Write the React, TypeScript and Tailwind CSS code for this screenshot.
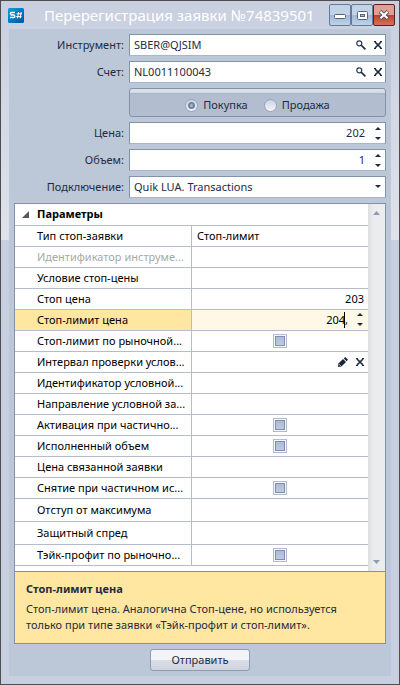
import type { ReactNode } from "react";

type RowKind = "text" | "number" | "spin" | "check" | "edit";
type Row = { name: string; kind: RowKind; value?: string; muted?: boolean; tall?: boolean };

const rows: Row[] = [
  { name: "Тип стоп-заявки", kind: "text", value: "Стоп-лимит" },
  { name: "Идентификатор инструме...", kind: "text", muted: true },
  { name: "Условие стоп-цены", kind: "text" },
  { name: "Стоп цена", kind: "number", value: "203" },
  { name: "Стоп-лимит цена", kind: "spin", value: "204," },
  { name: "Стоп-лимит по рыночной...", kind: "check" },
  { name: "Интервал проверки услов...", kind: "edit" },
  { name: "Идентификатор условной...", kind: "text" },
  { name: "Направление условной за...", kind: "text" },
  { name: "Активация при частично...", kind: "check" },
  { name: "Исполненный объем", kind: "check" },
  { name: "Цена связанной заявки", kind: "text" },
  { name: "Снятие при частичном ис...", kind: "check" },
  { name: "Отступ от максимума", kind: "text", tall: true },
  { name: "Защитный спред", kind: "text", tall: true },
  { name: "Тэйк-профит по рыночно...", kind: "check" },
];

function Cross() {
  return (
    <svg width="8" height="8" viewBox="0 0 8 8" className="shrink-0">
      <path d="M1 1 L7 7 M7 1 L1 7" stroke="#1c2a40" strokeWidth="1.7" />
      <path d="M0 .5h2M6 .5h2M0 7.5h2M6 7.5h2" stroke="#1c2a40" strokeWidth="1" />
    </svg>
  );
}

function Lens() {
  return (
    <svg width="10" height="10" viewBox="0 0 10 10" className="shrink-0">
      <circle cx="3.3" cy="3.3" r="2.5" fill="none" stroke="#2b3a52" strokeWidth="1.2" />
      <path d="M5 5 L9.4 9.4" stroke="#1c2a40" strokeWidth="1.7" />
    </svg>
  );
}

function Pencil() {
  return (
    <svg width="10" height="10" viewBox="0 0 10 10" className="shrink-0">
      <path d="M0 10 L.4 6.6 L5 2 L8 5 L3.4 9.6 Z" fill="#17243a" />
      <path d="M5.8 1.4 L7.2 0 L10 2.8 L8.6 4.2 Z" fill="#17243a" />
      <path d="M1.2 7.4 L2.6 8.8" stroke="#fff" strokeWidth="1" />
    </svg>
  );
}

function Spinner() {
  return (
    <span className="flex w-[14px] shrink-0 flex-col items-center gap-[7px]">
      <button type="button" aria-label="Увеличить" className="block">
        <svg width="6" height="3" viewBox="0 0 6 3" className="block">
          <path d="M0 3 L3 0 L6 3 Z" fill="#1c2a40" />
        </svg>
      </button>
      <button type="button" aria-label="Уменьшить" className="block">
        <svg width="6" height="3" viewBox="0 0 6 3" className="block">
          <path d="M0 0 L3 3 L6 0 Z" fill="#1c2a40" />
        </svg>
      </button>
    </span>
  );
}

function Field({ id, label, children }: { id: string; label: string; children: ReactNode }) {
  return (
    <div className="flex items-center">
      <label htmlFor={id} className="w-[115px] shrink-0 pr-[5px] text-right">
        {label}
      </label>
      <div className="flex h-[22px] min-w-0 flex-1 items-center border border-[#8392ab] border-b-[#a9b5cb] bg-white">
        {children}
      </div>
    </div>
  );
}

function LookupField({ id, label, value }: { id: string; label: string; value: string }) {
  return (
    <Field id={id} label={label}>
      <input id={id} defaultValue={value} className="min-w-0 flex-1 bg-transparent pl-1 outline-none" />
      <button type="button" aria-label="Найти" className="mr-2">
        <Lens />
      </button>
      <button type="button" aria-label="Очистить" className="mr-[3px]">
        <Cross />
      </button>
    </Field>
  );
}

function NumberField({ id, label, value }: { id: string; label: string; value: string }) {
  return (
    <Field id={id} label={label}>
      <input id={id} defaultValue={value} className="min-w-0 flex-1 bg-transparent pr-[6px] text-right outline-none" />
      <Spinner />
    </Field>
  );
}

function Radio({ label, checked }: { label: string; checked?: boolean }) {
  return (
    <label className="flex items-center gap-[5px]">
      <input
        type="radio"
        name="side"
        defaultChecked={checked}
        className="grid h-[13px] w-[13px] appearance-none place-items-center rounded-full border border-[#98a5bd] bg-linear-to-b from-[#cdd3de] to-[#f3f5f8] before:h-[7px] before:w-[7px] before:rounded-full checked:before:border-2 checked:before:border-[#6f82a3] checked:before:bg-[#a9b9d6]"
      />
      {label}
    </label>
  );
}

function Cell({ row, id }: { row: Row; id: string }) {
  if (row.kind === "check") {
    return (
      <div className="flex justify-center">
        <input
          id={id}
          type="checkbox"
          className="h-[14px] w-[14px] appearance-none border border-[#b3bccd] bg-linear-to-b from-[#aab8d2] to-[#c2cde0] shadow-[inset_0_0_0_1px_#f4f6fa,inset_0_0_0_2px_#7f8fb2]"
        />
      </div>
    );
  }
  if (row.kind === "edit") {
    return (
      <div className="flex items-center justify-end gap-2 pr-1">
        <input id={id} className="min-w-0 flex-1 bg-transparent outline-none" />
        <button type="button" aria-label="Изменить">
          <Pencil />
        </button>
        <button type="button" aria-label="Очистить">
          <Cross />
        </button>
      </div>
    );
  }
  if (row.kind === "spin") {
    return (
      <div className="flex items-center pr-[1px]">
        <div className="relative flex min-w-0 flex-1">
          <input id={id} defaultValue={row.value} className="w-full bg-transparent pr-[5px] text-right outline-none" />
          <span className="absolute top-0 right-2 h-4 w-px bg-black" />
        </div>
        <Spinner />
      </div>
    );
  }
  return (
    <input
      id={id}
      defaultValue={row.value}
      className={`block w-full bg-transparent pl-[5px] outline-none ${row.kind === "number" ? "pr-1 text-right" : ""}`}
    />
  );
}

function CaptionButton({ label, close, children }: { label: string; close?: boolean; children: ReactNode }) {
  return (
    <button
      type="button"
      aria-label={label}
      className={`flex h-[22px] w-[22px] items-center justify-center rounded-[2px] border ${
        close
          ? "border-[#5c1f26] bg-linear-to-b from-[#dfa093] from-50% via-[#bd3f2c] via-50% to-[#d1725c]"
          : "border-[#667b98] bg-linear-to-b from-[#c3d3e7] from-50% via-[#a0b8d6] via-50% to-[#bdd3ea]"
      }`}
    >
      {children}
    </button>
  );
}

export default function App() {
  return (
    <div className="flex min-h-screen flex-col border border-[#504b4c] bg-[linear-gradient(to_bottom,#c8cfdf_0,#dee3eb_239px,#c8cfde_239px)] px-2 pb-2 font-['Noto_Sans','Open_Sans',sans-serif] text-[11px] leading-4 text-[#1e2b43]">
      <header className="flex h-[28px] items-start justify-between pt-[3px]">
        <div className="flex items-center">
          <svg width="16" height="15" viewBox="0 0 16 15" className="-ml-px shrink-0">
            <defs>
              <linearGradient id="logo" x1="0" y1="0" x2="1" y2="1">
                <stop offset="0" stopColor="#0aa0dc" />
                <stop offset="1" stopColor="#0054a0" />
              </linearGradient>
            </defs>
            <rect width="16" height="15" rx="1.5" fill="url(#logo)" />
            <path d="M7 4.5H3.4Q2.4 4.5 2.4 5.6T3.4 7H5.6Q6.8 7 6.8 8.3T5.6 9.6H2" fill="none" stroke="#fff" strokeWidth="1.5" />
            <path d="M10.6 4L9.6 10.4M13.2 4L12.2 10.4M8.6 5.8H14M8.2 8.6H13.6" stroke="#fff" strokeWidth="1" />
          </svg>
          <h1 className="ml-[20px] text-[15px] leading-[22px] whitespace-nowrap text-white">
            Перерегистрация заявки №74839501
          </h1>
        </div>
        <div className="-mr-1 flex shrink-0">
          <CaptionButton label="Свернуть">
            <svg width="12" height="5" viewBox="0 0 12 5" className="mt-[3px]">
              <rect x=".5" y=".5" width="11" height="4" rx="1" fill="#fff" stroke="#56627b" />
            </svg>
          </CaptionButton>
          <CaptionButton label="Развернуть">
            <svg width="11" height="9" viewBox="0 0 11 9">
              <rect x=".5" y=".5" width="10" height="8" rx="1" fill="#fff" stroke="#56627b" />
              <rect x="3.5" y="3.5" width="4" height="2" fill="#a9bcd6" stroke="#56627b" />
            </svg>
          </CaptionButton>
          <CaptionButton label="Закрыть" close>
            <svg width="12" height="10" viewBox="0 0 12 10">
              <path d="M2 1.5L10 8.5M10 1.5L2 8.5" stroke="#5a4a5c" strokeWidth="4" />
              <path d="M2.4 1.8L9.6 8.2M9.6 1.8L2.4 8.2" stroke="#fff" strokeWidth="2.2" />
            </svg>
          </CaptionButton>
        </div>
      </header>

      <form className="flex flex-1 flex-col gap-[5px] bg-[#bcc7d8] p-[5px]" onSubmit={(e) => e.preventDefault()}>
        <LookupField id="instrument" label="Инструмент:" value="SBER@QJSIM" />
        <LookupField id="account" label="Счет:" value="NL0011100043" />
        <div
          role="radiogroup"
          aria-label="Направление"
          className="ml-[115px] flex h-[29px] items-center justify-center gap-4 rounded-[3px] border border-[#8392ab] bg-[linear-gradient(to_bottom,#dfe3eb_0,#d3d9e3_4px,#a6b3c9_4px,#b2bdd0_6px,#b2bdd0_100%)] pt-[5px]"
        >
          <Radio label="Покупка" checked />
          <Radio label="Продажа" />
        </div>
        <NumberField id="price" label="Цена:" value="202" />
        <NumberField id="volume" label="Объем:" value="1" />
        <Field id="connection" label="Подключение:">
          <div className="relative flex min-w-0 flex-1">
            <select id="connection" className="w-full appearance-none bg-transparent pl-1 outline-none">
              <option>Quik LUA. Transactions</option>
            </select>
            <svg width="6" height="3" viewBox="0 0 6 3" className="pointer-events-none absolute top-[6px] right-1">
              <path d="M0 0 L3 3 L6 0 Z" fill="#1c2a40" />
            </svg>
          </div>
        </Field>

        <section className="border border-[#8392ab] bg-white text-black">
          <div className="flex">
            <div className="min-w-0 flex-1 pb-[5px]">
              <table className="w-full table-fixed border-collapse">
                <colgroup>
                  <col className="w-1/2" />
                  <col className="w-1/2" />
                </colgroup>
                <thead>
                  <tr className="h-[21px] border-b border-[#b4bccd]">
                    <th colSpan={2} className="p-0 text-left font-bold">
                      <div className="flex items-center gap-2 pl-[7px]">
                        <svg width="7" height="7" viewBox="0 0 7 7">
                          <path d="M7 0V7H0Z" fill="#595959" />
                        </svg>
                        Параметры
                      </div>
                    </th>
                  </tr>
                </thead>
                <tbody>
                  {rows.map((row, i) => (
                    <tr key={row.name} className={`border-b border-[#b4bccd] ${row.tall ? "h-[23px]" : "h-[21px]"}`}>
                      <th
                        scope="row"
                        className={`border-r border-[#b4bccd] p-0 text-left font-normal ${
                          row.kind === "spin" ? "bg-[#ffe6a1]" : ""
                        } ${row.muted ? "text-[#a8a8a8]" : ""}`}
                      >
                        <label htmlFor={`row-${i}`} className="block truncate pl-[22px]">
                          {row.name}
                        </label>
                      </th>
                      <td className={`p-0 ${row.kind === "spin" ? "bg-[#fff8e6]" : ""}`}>
                        <Cell row={row} id={`row-${i}`} />
                      </td>
                    </tr>
                  ))}
                </tbody>
              </table>
            </div>
            <div className="flex w-[17px] shrink-0 flex-col items-center justify-between bg-linear-to-r from-[#dcdee0] to-[#ebecee] to-30% py-[7px]">
              <svg width="7" height="4" viewBox="0 0 7 4">
                <path d="M0 4L3.5 0L7 4Z" fill="#8d9bb2" />
              </svg>
              <svg width="7" height="4" viewBox="0 0 7 4">
                <path d="M0 0L3.5 4L7 0Z" fill="#8d9bb2" />
              </svg>
            </div>
          </div>
          <div className="border-t border-[#8392ab] bg-[#ffe6a1] px-[11px] pt-[9px] pb-[10px] text-[#1e2b43]">
            <h2 className="font-bold">Стоп-лимит цена</h2>
            <p className="mt-1">
              Стоп-лимит цена. Аналогична Стоп-цене, но используется только при типе заявки «Тэйк-профит и стоп-лимит».
            </p>
          </div>
        </section>

        <button
          type="submit"
          className="h-[22px] w-[100px] self-center rounded-[3px] border border-[#8e9bb3] bg-linear-to-b from-[#f3f4f7] from-50% via-[#dadee6] via-50% to-[#cfd5e0]"
        >
          Отправить
        </button>
      </form>
    </div>
  );
}
